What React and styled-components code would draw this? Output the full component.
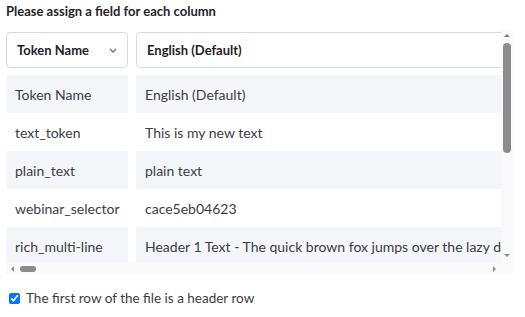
import React from 'react';
import styled, { createGlobalStyle } from 'styled-components';

const GlobalStyle = createGlobalStyle`
  body {
    margin: 0;
    background: #fff;
    font-family: Lato, "Noto Sans", sans-serif;
  }
`

const Page = styled.div`
  padding: 1px 12px 0 6px;
`

const Title = styled.h4`
  margin: 0;
  font-size: 13px;
  font-weight: 700;
  line-height: 20px;
  color: #23252d;
`

const Frame = styled.div`
  margin-top: 9px;
  display: grid;
  grid-template-columns: 495px 12px;
  grid-template-rows: 233px 11px;
`

const Viewport = styled.div`
  overflow: hidden;
  padding-top: 2px;
`

const Grid = styled.div`
  display: grid;
  grid-template-columns: 122px 3000px;
  column-gap: 8px;
  width: max-content;
`

const Select = styled.div`
  height: 36px;
  box-sizing: border-box;
  border: 1px solid #d6dae3;
  border-radius: 4px;
  display: flex;
  align-items: center;
  justify-content: space-between;
  padding: 0 10px;
  font-size: 13px;
  font-weight: 700;
  color: #1f2129;
  margin-bottom: 7px;
`

const Cell = styled.div`
  height: 38px;
  display: flex;
  align-items: center;
  padding-left: 9px;
  font-size: 14px;
  color: #3a3d47;
  white-space: nowrap;
  overflow: hidden;
  background: ${p => (p.$shaded ? '#f5f6f9' : '#fff')};
`

const VBar = styled.div`
  background: #f9f9f9;
  display: flex;
  flex-direction: column;
  align-items: center;
  padding: 4px 0 6px;
`

const HBar = styled.div`
  background: #f9f9f9;
  display: flex;
  align-items: center;
  padding: 0 5px;
`

const Corner = styled.div`
  background: #f9f9f9;
`

const Thumb = styled.div`
  background: #8c8c8c;
  border-radius: 4px;
  width: ${p => p.$w};
  height: ${p => p.$h};
  margin: ${p => p.$m};
`

const Spacer = styled.div`
  flex: 1;
`

const Arrow = styled.div`
  width: 0;
  height: 0;
  border: 3px solid transparent;
  ${p => p.$dir === 'up' && 'border-bottom: 3px solid #7d7d7d; border-top-width: 0;'}
  ${p => p.$dir === 'down' && 'border-top: 3px solid #8d8d8d; border-bottom-width: 0;'}
  ${p => p.$dir === 'left' && 'border-right: 3px solid #8d8d8d; border-left-width: 0;'}
  ${p => p.$dir === 'right' && 'border-left: 3px solid #8d8d8d; border-right-width: 0;'}
`

const CheckRow = styled.label`
  display: flex;
  align-items: center;
  gap: 6px;
  margin-top: 16px;
  padding-left: 3px;
  font-size: 13.5px;
  color: #3a3d47;
`

const Check = styled.input`
  width: 11px;
  height: 11px;
  margin: 0;
`

const rows = [
  ['Token Name', 'English (Default)'],
  ['text_token', 'This is my new text'],
  ['plain_text', 'plain text'],
  ['webinar_selector', 'cace5eb04623'],
  ['rich_multi-line', 'Header 1 Text - The quick brown fox jumps over the lazy dog. Header 2 Text - The quick brown fox jumps over the lazy dog.'],
  ['button_label', 'Get started'],
  ['page_title', 'Welcome back'],
  ['footer_note', 'All rights reserved'],
  ['cta_text', 'Sign up now'],
  ['error_message', 'Something went wrong'],
]

function Chevron() {
  return (
    <svg width="8" height="5" viewBox="0 0 8 5">
      <path d="M1 1l3 3 3-3" fill="none" stroke="#6b7080" strokeWidth="1.3" />
    </svg>
  )
}

export default function App() {
  return (
    <Page>
      <GlobalStyle />
      <Title>Please assign a field for each column</Title>
      <Frame>
        <Viewport>
          <Grid>
            <Select>Token Name <Chevron /></Select>
            <Select>English (Default)</Select>
            {rows.map((row, i) => (
              <React.Fragment key={i}>
                <Cell $shaded={i % 2 === 0}>{row[0]}</Cell>
                <Cell $shaded={i % 2 === 0}>{row[1]}</Cell>
              </React.Fragment>
            ))}
          </Grid>
        </Viewport>
        <VBar>
          <Arrow $dir="up" />
          <Thumb $w="8px" $h="110px" $m="6px 0 0" />
          <Spacer />
          <Arrow $dir="down" />
        </VBar>
        <HBar>
          <Arrow $dir="left" />
          <Thumb $w="16px" $h="6px" $m="0 0 0 6px" />
          <Spacer />
          <Arrow $dir="right" />
        </HBar>
        <Corner />
      </Frame>
      <CheckRow>
        <Check type="checkbox" defaultChecked />
        The first row of the file is a header row
      </CheckRow>
    </Page>
  )
}
